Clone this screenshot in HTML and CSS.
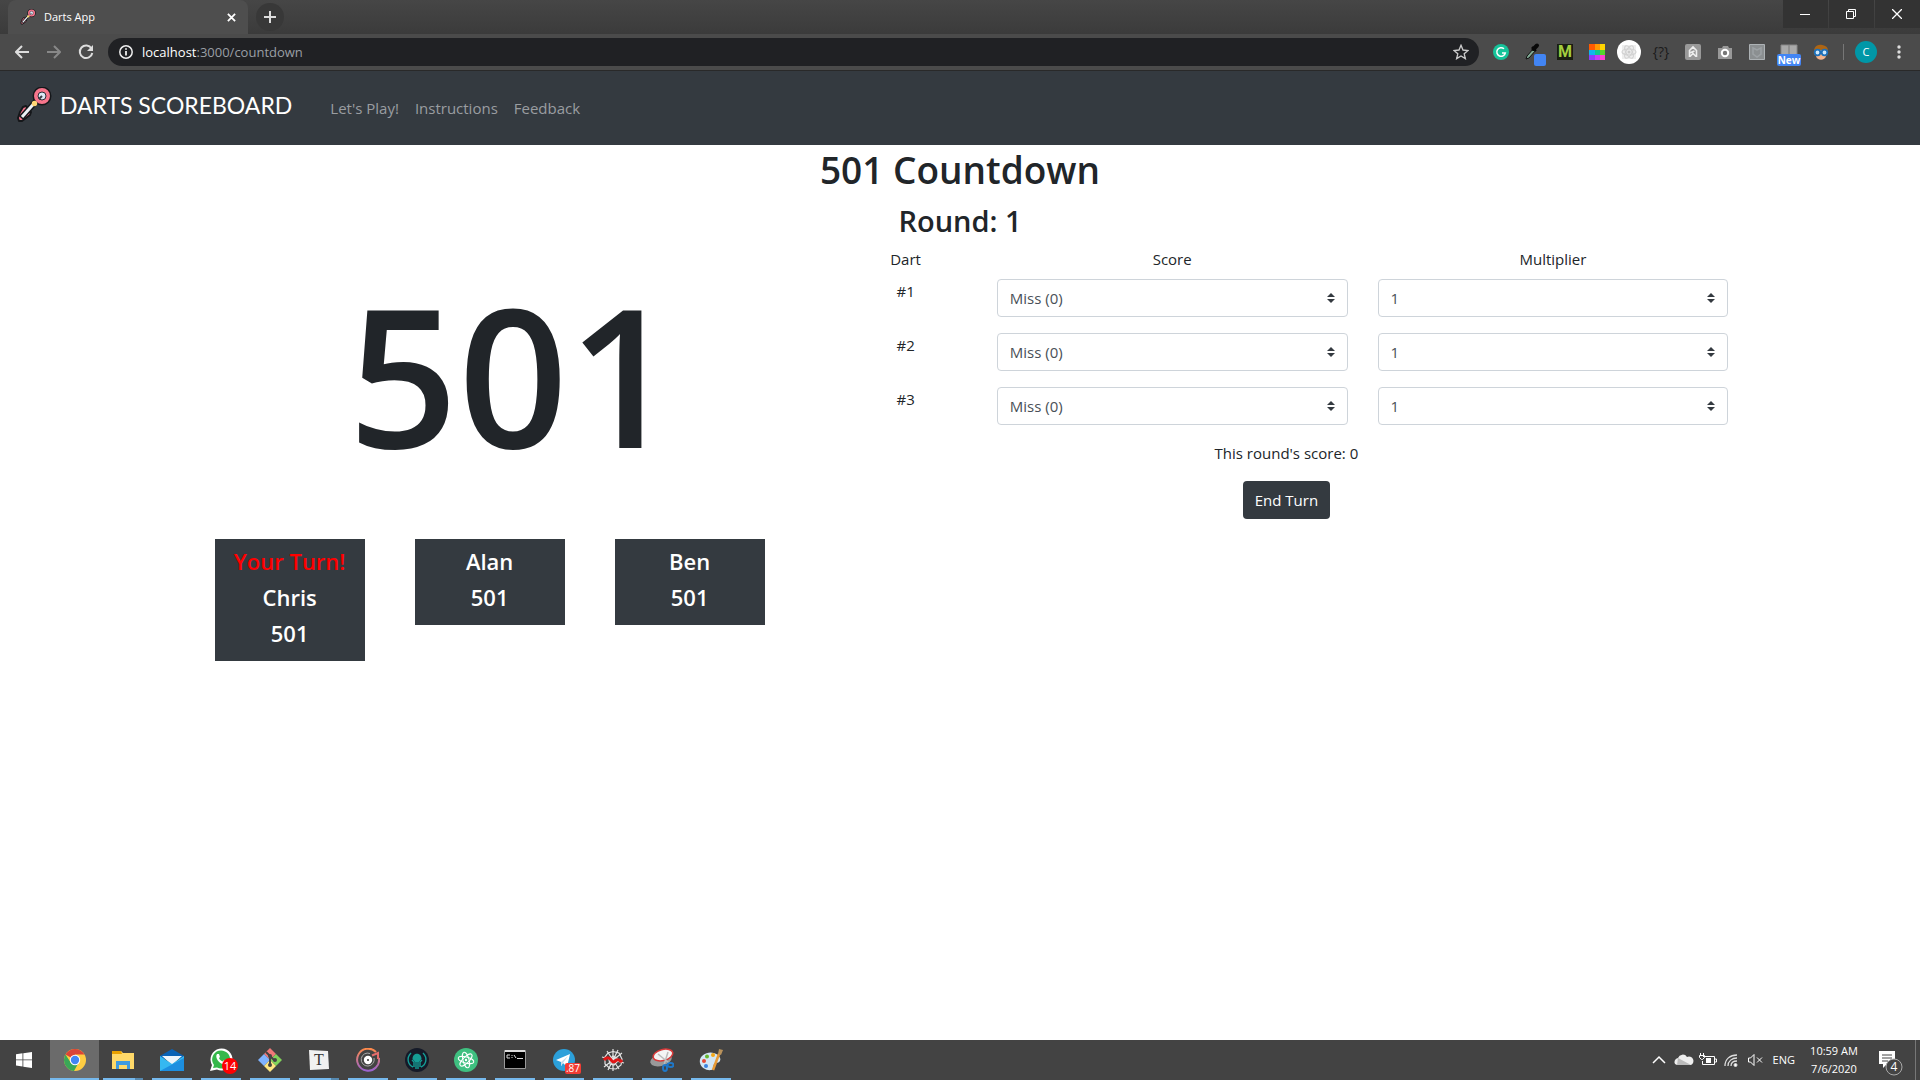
FILE: index.html
```html
<!DOCTYPE html>
<html lang="en">
<head>
<meta charset="utf-8">
<title>Darts App</title>
<link rel="stylesheet" href="styles.css">
</head>
<body>
<svg class="defs" aria-hidden="true">
  <symbol id="dart" viewBox="0 0 36 36">
    <path d="M7 20 10 19 12 22 12 25 15 25 14 28 6 34 3 34 2 31 4 25z" fill="#f7758c" stroke="#15171a" stroke-width="2" stroke-linejoin="round"/>
    <path d="M5 31 22 12" stroke="#15171a" stroke-width="6"/>
    <path d="M6 30 22 12" stroke="#eef2f6" stroke-width="3"/>
    <circle cx="26" cy="9" r="7" fill="none" stroke="#15171a" stroke-width="5"/>
    <circle cx="26" cy="9" r="6" fill="#dce8f6" stroke="#f7758c" stroke-width="4"/>
    <circle cx="26" cy="9" r="4" fill="none" stroke="#2a2c34"/>
    <path d="M23 12 26 9" stroke="#3b3d46" stroke-width="2"/>
    <circle cx="18.500" cy="16.500" r="2.700" fill="#ffd675"/>
  </symbol>
</svg>

<header class="browser">
  <div class="tabs">
    <div class="tab">
      <svg class="favicon" viewBox="0 0 36 36"><use href="#dart"/></svg>
      <span class="tab-title">Darts App</span>
      <button class="plain" aria-label="Close tab"><svg width="9" height="9" viewBox="0 0 10 10"><path d="M1 1l8 8M9 1l-8 8" stroke="#fff" stroke-width="2"/></svg></button>
    </div>
    <button class="plain new-tab" aria-label="New tab"><svg width="12" height="12" viewBox="0 0 12 12"><path d="M6 0v12M0 6h12" stroke="#ddd" stroke-width="2"/></svg></button>
    <div class="window-controls">
      <button class="plain" aria-label="Minimize"><svg width="10" height="10"><path d="M0 5.500h10" stroke="#fff"/></svg></button>
      <button class="plain" aria-label="Restore"><svg width="10" height="10" fill="none" stroke="#fff"><path d="M.5 2.500h7v7h-7zM2.500 2.500v-2h7v7h-2"/></svg></button>
      <button class="plain" aria-label="Close"><svg width="10" height="10"><path d="M0 0l10 10M10 0L0 10" stroke="#fff" stroke-width="1.300"/></svg></button>
    </div>
  </div>
  <div class="toolbar">
    <div class="history">
      <button class="plain" aria-label="Back"><svg width="14" height="14" viewBox="0 0 14 14" fill="none" stroke="#ddd" stroke-width="2"><path d="M14 7H1M7 1 1 7l6 6"/></svg></button>
      <button class="plain" aria-label="Forward"><svg width="14" height="14" viewBox="0 0 14 14" fill="none" stroke="#888" stroke-width="2"><path d="M0 7h13M7 1l6 6-6 6"/></svg></button>
      <button class="plain" aria-label="Reload"><svg width="16" height="16" viewBox="0 0 16 16" fill="none" stroke="#ddd" stroke-width="2"><path d="M13.500 4.500A6.300 6.300 0 1 0 14.300 9"/><path d="M15 1v6H9z" fill="#ddd" stroke="none"/></svg></button>
    </div>
    <div class="address">
      <svg width="14" height="14" viewBox="0 0 14 14"><circle cx="7" cy="7" r="6.200" fill="none" stroke="#eee" stroke-width="1.500"/><path d="M7 6v4.500M7 3.200v1.600" stroke="#eee" stroke-width="1.800"/></svg>
      <span class="url">localhost<span class="path">:3000/countdown</span></span>
      <svg class="star" width="16" height="16" viewBox="0 0 24 24"><path d="M12 2l3 7 7.500.7-5.700 5 1.700 7.300L12 18l-6.500 4 1.700-7.300-5.700-5L9 9z" fill="none" stroke="#ccc" stroke-width="2"/></svg>
    </div>
    <div class="extensions">
      <span class="ext"><svg viewBox="0 0 24 24"><circle cx="12" cy="12" r="8" fill="#15c39a"/><path d="M15 8.800A4.300 4.300 0 1 0 16.300 13H13" fill="none" stroke="#fff" stroke-width="1.500"/></svg></span>
      <span class="ext"><svg viewBox="0 0 24 24"><path d="M5 19l1-3 7-8 2 2-7 8z" fill="#7fa893" stroke="#111"/><path d="M11 7l4 4" stroke="#080808" stroke-width="2"/><path d="M12.500 9 16 5.500" stroke="#080808" stroke-width="4" stroke-linecap="round"/><rect x="13" y="14" width="12" height="12" rx="2" fill="#4285f4"/></svg></span>
      <span class="ext"><b class="m-badge">M</b></span>
      <span class="ext"><svg viewBox="0 0 24 24"><path d="M4 4h6v6H4z" fill="#ff5a00"/><path d="M10 4h5v6h-5z" fill="#ff9800"/><path d="M15 4h5v6h-5z" fill="#ffd400"/><path d="M4 10h6v5H4z" fill="#10b5ee"/><path d="M10 10h5v5h-5z" fill="#0fc98d"/><path d="M15 10h5v5h-5z" fill="#54d62c"/><path d="M4 15h6v5H4z" fill="#8a3ffc"/><path d="M10 15h5v5h-5z" fill="#c63ff5"/><path d="M15 15h5v5h-5z" fill="#ff3fd2"/></svg></span>
      <span class="ext"><svg viewBox="0 0 24 24"><circle cx="12" cy="12" r="12" fill="#fff"/><path d="M5 5h14v14H5z" fill="#eee"/><g fill="none" stroke="#d2d2d2" stroke-width="1.200"><ellipse cx="12" cy="12" rx="7" ry="3"/><ellipse cx="12" cy="12" rx="7" ry="3" transform="rotate(60 12 12)"/><ellipse cx="12" cy="12" rx="7" ry="3" transform="rotate(120 12 12)"/></g><circle cx="12" cy="12" r="1.500" fill="#ccc"/></svg></span>
      <span class="ext code">{?}</span>
      <span class="ext"><svg viewBox="0 0 24 24"><rect x="4" y="4" width="16" height="16" rx="2" fill="#999"/><path d="M8.500 17V10.500L12 7l3.500 3.500V17M8.500 13l5-2M9 16.500l3-3 3 3" fill="none" stroke="#eee" stroke-width="1.600"/></svg></span>
      <span class="ext"><svg viewBox="0 0 24 24"><path d="M5 8h4l1-2h5l1 2h3v11H5z" fill="#999"/><circle cx="12" cy="13" r="3.200" fill="#777" stroke="#fff" stroke-width="2"/></svg></span>
      <span class="ext"><svg viewBox="0 0 24 24"><path d="M4.500 4.500h15v15h-15z" fill="#8b8f91" stroke="#adb2b5"/><path d="M8 8l4 2 4-2v6l-4 3-4-3z" fill="none" stroke="#9da2a5" stroke-width="1.500"/></svg></span>
      <span class="ext"><svg viewBox="0 0 24 24"><path d="M4 5h8v10H4zM12 5h8v10h-8z" fill="#aaa" stroke="#888"/></svg><b class="new">New</b></span>
      <span class="ext"><svg viewBox="0 0 24 24"><path d="M5 15c-1-7 2-11 8-10s7 4 5 11z" fill="#ad6514"/><path d="M7 10h10v6c-1 5-9 5-10 0z" fill="#f3b38a"/><g fill="#cfe8fb" stroke="#1c6fb9" stroke-width="1.800"><circle cx="8.500" cy="12.500" r="2.800"/><circle cx="15.500" cy="12.500" r="2.800"/></g></svg></span>
    </div>
    <span class="divider"></span>
    <span class="avatar">C</span>
    <button class="plain menu" aria-label="Menu"><svg width="4" height="14" fill="#ddd"><circle cx="2" cy="2" r="1.700"/><circle cx="2" cy="7" r="1.700"/><circle cx="2" cy="12" r="1.700"/></svg></button>
  </div>
</header>

<nav class="navbar">
  <a class="brand" href="#"><svg width="36" height="36" viewBox="0 0 36 36"><use href="#dart"/></svg><span>DARTS SCOREBOARD</span></a>
  <div class="links">
    <a href="#">Let's Play!</a>
    <a href="#">Instructions</a>
    <a href="#">Feedback</a>
  </div>
</nav>

<main>
  <h1>501 Countdown</h1>
  <h2>Round: 1</h2>
  <div class="game">
    <section class="standings">
      <p class="remaining">501</p>
      <div class="players">
        <div class="player"><p class="turn">Your Turn!</p><p>Chris</p><p>501</p></div>
        <div class="player"><p>Alan</p><p>501</p></div>
        <div class="player"><p>Ben</p><p>501</p></div>
      </div>
    </section>
    <form class="turn-form">
      <div class="throw head"><span>Dart</span><span>Score</span><span>Multiplier</span></div>
      <div class="throw"><span>#1</span><select aria-label="Dart 1 score"><option>Miss (0)</option></select><select aria-label="Dart 1 multiplier"><option>1</option></select></div>
      <div class="throw"><span>#2</span><select aria-label="Dart 2 score"><option>Miss (0)</option></select><select aria-label="Dart 2 multiplier"><option>1</option></select></div>
      <div class="throw"><span>#3</span><select aria-label="Dart 3 score"><option>Miss (0)</option></select><select aria-label="Dart 3 multiplier"><option>1</option></select></div>
      <p class="round-score">This round's score: 0</p>
      <button class="end-turn" type="button">End Turn</button>
    </form>
  </div>
</main>

<footer class="taskbar">
  <button class="plain start" aria-label="Start"><svg width="16" height="16" viewBox="0 0 16 16" fill="#fff"><path d="M0 2.200 6.500 1.300v6.200H0zM7.300 1.200 16 0v7.500H7.300zM0 8.300h6.500v6.200L0 13.600zM7.300 8.300H16V16l-8.700-1.200z"/></svg></button>
  <div class="apps">
    <button class="plain app active" aria-label="Chrome"><svg viewBox="0 0 24 24"><circle cx="12" cy="12" r="11" fill="#ffcd42"/><path d="M12 12 2.500 6.500A11 11 0 0 1 21.500 6.500H12z" fill="#db4437"/><path d="M2.500 6.500A11 11 0 0 0 11 23l5-9-8 1z" fill="#3aa757"/><circle cx="12" cy="12" r="5.200" fill="#fff"/><circle cx="12" cy="12" r="4.200" fill="#4285f4"/></svg></button>
    <button class="plain app stacked" aria-label="File Explorer"><svg viewBox="0 0 24 24"><path d="M1 3h9l2 2h11v16H1z" fill="#ffd969"/><path d="M1 3h9l1 3H1z" fill="#e9a100"/><path d="M5 21v-8h14v8h-3v-4H8v4z" fill="#3f9be0"/></svg></button>
    <button class="plain app" aria-label="Mail"><svg viewBox="0 0 24 24"><path d="M0 8 12 1l12 7v3H0z" fill="#0a62b5"/><path d="M2 8h20l-10 9z" fill="#eef5fb"/><path d="M0 8l12 8 12-8v15H0z" fill="#35b8f1"/><path d="M0 23 24 10v13z" fill="#1d8fe0"/></svg></button>
    <button class="plain app" aria-label="WhatsApp"><svg viewBox="0 0 24 24"><path d="M1 23l2-6A11 11 0 1 1 8 21.500z" fill="#fff"/><path d="M4 20l1-3a9 9 0 1 1 3 2.500z" fill="#35b84b"/><path d="M8 6c-3 4 4 12 9 10l1-2-3-2-1.500 1.500C11 12 10 10.500 10 10l1-1-1-3z" fill="#fff"/></svg><span class="count">14</span></button>
    <button class="plain app" aria-label="Git"><svg viewBox="0 0 24 24"><path d="M12 0l6 6-6 6-6-6z" fill="#f07878"/><path d="M6 6l6 6-6 6-6-6z" fill="#80b3ff"/><path d="M18 6l6 6-6 6-6-6z" fill="#80d25b"/><path d="M12 12l6 6-6 6-6-6z" fill="#ffe680"/><path d="M8 4l4 4v10M12 8l5 5" fill="none" stroke="#444" stroke-width="2"/><g fill="#444"><circle cx="12" cy="8" r="2"/><circle cx="12" cy="17" r="2"/><circle cx="17" cy="12" r="2"/></g></svg></button>
    <button class="plain app stacked" aria-label="Typora"><svg viewBox="0 0 24 24"><path d="M2 2 21 3 22 21 3 22z" fill="#f1f1f1"/></svg><span class="letter">T</span></button>
    <button class="plain app" aria-label="Music"><svg viewBox="0 0 24 24"><defs><linearGradient id="ring" x2="0" y2="1"><stop stop-color="#ff8a4a"/><stop offset="1" stop-color="#9a63cf"/></linearGradient></defs><path d="M20 4A11 11 0 1 0 23 10" fill="none" stroke="url(#ring)" stroke-width="2"/><path d="M18 10A6.500 6.500 0 1 1 14 5.500" fill="none" stroke="#aaa"/><circle cx="12" cy="12" r="4.200" fill="#fff"/><circle cx="12" cy="12" r="1" fill="#333"/><path d="M16 7.500 22 5v6" fill="none" stroke="#e36c6c" stroke-width="2"/></svg></button>
    <button class="plain app" aria-label="GitKraken"><svg viewBox="0 0 24 24"><circle cx="12" cy="12" r="12" fill="#151a28"/><path d="M7.500 11c0-7 9-7 9 0L14 14h-4z" fill="#159c95"/><path d="M9 19v-5l-2-2M11 21v-8M13 21v-8M15 19v-5l2-2M6 5c-5 5-3 12 2 14M18 5c5 5 3 12-2 14" fill="none" stroke="#159c95" stroke-width="1.400"/></svg></button>
    <button class="plain app" aria-label="Atom"><svg viewBox="0 0 24 24"><circle cx="12" cy="12" r="12" fill="#3fc080"/><g fill="none" stroke="#fff"><ellipse cx="12" cy="12" rx="8" ry="3" transform="rotate(15 12 12)"/><ellipse cx="12" cy="12" rx="8" ry="3" transform="rotate(75 12 12)"/><ellipse cx="12" cy="12" rx="8" ry="3" transform="rotate(135 12 12)"/></g><circle cx="12" cy="12" r="1.200" fill="#fff"/></svg></button>
    <button class="plain app" aria-label="Command Prompt"><svg viewBox="0 0 24 24"><path d="M1.500 2.500h21v18h-21z" fill="#000" stroke="#999"/><path d="M2 2h20v2H2z" fill="#ddd"/><path d="M7 7H4v3h3M9 7v1M9 9v1M11 7l2 3M14 10.500h6" fill="none" stroke="#ddd"/></svg></button>
    <button class="plain app" aria-label="Telegram"><svg viewBox="0 0 24 24"><circle cx="12" cy="12" r="11" fill="#2ca0da"/><path d="M4 12 18 6l-3 13-4-4-2 3v-4z" fill="#fff"/><path d="M9 14l7-6-5 7-2 3z" fill="#c5dcec"/></svg><span class="count square">.87</span></button>
    <button class="plain app" aria-label="Spyder"><svg viewBox="0 0 24 24"><g fill="none" stroke="#e4e4e4" stroke-width="1.200"><path d="M12 1v22M1 9l22 6M3 19 21 5M7 22 17 2M18 21 6 3"/><path d="M12 3.500 18 5l3 6-1 6-5 4-6-.5-5-4.500L4 9l3-4z"/><path d="M12 8l4 2v4l-3 3-4-1-1-4z"/></g><path d="M3 12c3-4 6-2 8 1s5-3 7-1 2 1 3 0" fill="none" stroke="#e01616" stroke-width="3"/></svg></button>
    <button class="plain app" aria-label="Snipping Tool"><svg viewBox="0 0 24 24"><ellipse cx="11" cy="12" rx="11" ry="6" fill="#999" transform="rotate(-15 11 12)"/><ellipse cx="13" cy="7" rx="10" ry="5.500" fill="#f4f4f4" stroke="#d83a3a" stroke-width="1.500" transform="rotate(-15 13 7)"/><path d="M8 6l11 9M18 4l-4 13" stroke="#bbb" stroke-width="1.500"/><g fill="none" stroke="#1f78c8" stroke-width="2"><ellipse cx="15" cy="20" rx="2" ry="3"/><ellipse cx="20.500" cy="17" rx="3" ry="2"/></g></svg></button>
    <button class="plain app" aria-label="Paint"><svg viewBox="0 0 24 24"><path d="M1 15C-1 6 12 1 19 7c5 5 1 8-2 8s-2 3-3 6c-3 3-12 0-13-6z" fill="#d3e7f5"/><g><circle cx="5" cy="13" r="2" fill="#e64a35"/><circle cx="8" cy="8.500" r="2" fill="#66b82e"/><circle cx="14" cy="7" r="2" fill="#f3a719"/><circle cx="7" cy="18" r="2" fill="#3b84df"/></g><path d="M14 22 20 6" stroke="#e89b37" stroke-width="2.500"/><path d="M19 6l1-5 4 1-2 5z" fill="#b9925b"/></svg></button>
  </div>
  <div class="tray">
    <svg width="24" height="24" viewBox="0 0 24 24" fill="none" stroke="#fff" stroke-width="1.500"><path d="M6 15l6-6 6 6"/></svg>
    <svg width="24" height="24" viewBox="0 0 24 24"><path d="M4 16a4 4 0 0 1 3-6 5 5 0 0 1 9-1 4 4 0 0 1 4 8H6z" fill="#eee"/><path d="M7 10l13 7H6z" fill="#bbb"/></svg>
    <svg width="24" height="24" viewBox="0 0 24 24" fill="none" stroke="#fff"><path d="M8 8.500h11.500v8H7.500V13M20 11h1.500v3H20M5.500 5v2M8.500 5v2M4.500 7.500h5v2l-2 2h-1l-2-2z"/><path d="M11 10h5v5h-5z" fill="#fff" stroke="none"/></svg>
    <svg width="24" height="24" viewBox="0 0 24 24" fill="none" stroke="#ddd"><path d="M6 18C6 11 11 7 18 7M9 18c0-5 4-8 9-8M12 18c0-3 2-5 6-5" stroke-width="1.300"/><circle cx="16.500" cy="17" r="1.500" fill="#fff"/></svg>
    <svg width="24" height="24" viewBox="0 0 24 24" fill="none" stroke="#fff"><path d="M5.500 10v4h2l3.500 3.500v-11L7.500 10zM14 9.500l5 5M19 9.500l-5 5"/></svg>
    <span class="lang">ENG</span>
    <time class="clock"><span>10:59 AM</span><span>7/6/2020</span></time>
    <svg class="notes" width="28" height="28" viewBox="0 0 28 28"><path d="M2 3h16v13h-8l-4 4v-4H2z" fill="#fff"/><path d="M5 7h10M5 10h10M5 13h6" stroke="#444"/><circle cx="17" cy="19" r="8" fill="#444" stroke="#aaa"/><text x="17" y="23" text-anchor="middle">4</text></svg>
    <span class="show-desktop"></span>
  </div>
</footer>
</body>
</html>
```
FILE: styles.css
```css
* { box-sizing: border-box; }
body { margin: 0; min-height: 100vh; display: flex; flex-direction: column; background: #fff; color: #212529; font: 15px/24px "Open Sans", "Noto Sans", sans-serif; }
p, h1, h2 { margin: 0; }
a { text-decoration: none; }
.defs { display: none; }
.plain { display: flex; align-items: center; justify-content: center; padding: 0; border: 0; background: none; color: #fff; }

/* Browser chrome */
.browser { background: #4b4b4b; border-bottom: 1px solid #292929; }
.tabs { display: flex; height: 34px; padding-left: 8px; background: linear-gradient(#464646, #3b3b3b); }
.tab { display: flex; align-items: center; gap: 8px; width: 240px; padding: 0 12px; border-radius: 8px 8px 0 0; background: #4e4e4e; color: #fff; font-size: 11px; }
.favicon { width: 16px; height: 16px; }
.tab-title { flex: 1; }
.new-tab { width: 28px; height: 28px; margin: 3px 8px; border-radius: 50%; background: #383838; }
.window-controls { display: flex; gap: 1px; margin-left: auto; }
.window-controls button { width: 45px; height: 28px; padding-right: 2px; background: #333; }
.toolbar { display: flex; align-items: center; height: 36px; }
.history { display: flex; gap: 2px; padding-left: 7px; }
.history button { width: 30px; height: 28px; }
.address { display: flex; align-items: center; flex: 1; gap: 9px; height: 28px; margin: 0 10px 0 7px; padding: 0 10px 0 11px; border-radius: 14px; background: #202124; color: #fff; font-size: 13px; }
.url { flex: 1; }
.path { color: #9a9fa4; }
.extensions { display: flex; gap: 8px; }
.ext { position: relative; display: flex; align-items: center; justify-content: center; width: 24px; height: 24px; }
.ext svg { width: 24px; height: 24px; overflow: visible; }
.code { color: #1b1b1b; font-size: 14px; }
.m-badge { width: 16px; height: 16px; background: #1a1d12; color: #a3cf3f; font: bold 16px/16px Roboto, sans-serif; text-align: center; }
.new { position: absolute; top: 14px; left: 0; width: 24px; border-radius: 2px; background: #4285f4; color: #fff; font-size: 10px; line-height: 12px; text-align: center; }
.divider { width: 1px; height: 16px; margin: 0 11px 0 10px; background: #777; }
.avatar { width: 22px; height: 22px; border-radius: 50%; background: #0097a7; color: #fff; font-size: 11px; line-height: 22px; text-align: center; }
.menu { width: 43px; height: 28px; }

/* Site navigation */
.navbar { display: flex; align-items: center; gap: 38px; height: 74px; padding: 0 16px 6px; background: #343a40; }
.brand { display: flex; align-items: center; gap: 8px; color: #fff; font: 23px/30px Lato, sans-serif; }
.links { display: flex; gap: 16px; padding-top: 6px; }
.links a { color: #9a9da0; }

/* Game */
main { flex: 1; padding: 1px 9.2% 0; }
h1, h2 { font-weight: 600; text-align: center; }
h1 { font-size: 37px; line-height: 48px; }
h2 { padding-top: 8px; font-size: 29px; line-height: 38px; }
.game { display: grid; grid-template-columns: 5fr 7fr; }
.standings { padding-top: 4px; }
.remaining { padding-left: 20px; font-size: 192px; font-weight: 600; line-height: 260px; text-align: center; }
.players { display: flex; align-items: flex-start; gap: 50px; padding: 35px 0 0 38px; }
.player { width: 150px; padding: 4px 0 10px; background: #343a40; color: #fff; font-size: 22px; font-weight: 600; line-height: 36px; text-align: center; }
.turn { color: #f00; }
.turn-form { display: flex; flex-direction: column; align-items: center; padding-top: 7px; }
.throw { display: grid; grid-template-columns: 2fr 5fr 5fr; width: 100%; padding-bottom: 16px; text-align: center; }
.head { padding-bottom: 8px; }
.throw select { height: 38px; margin: 0 15px; padding: 6px 12px; appearance: none; border: 1px solid #ced4da; border-radius: 4px; color: #495057; font: inherit; background: #fff url("data:image/svg+xml,%3Csvg xmlns='http://www.w3.org/2000/svg' viewBox='0 0 4 5'%3E%3Cpath fill='%23343a40' d='M2 0L0 2h4zm0 5L0 3h4z'/%3E%3C/svg%3E") no-repeat right 12px center / 8px 10px; }
.end-turn { height: 38px; margin-top: 16px; padding: 0 12px; border: 0; border-radius: 4px; background: #343a40; color: #fff; font: inherit; }

/* Taskbar */
.taskbar { display: flex; height: 40px; background: #434343; color: #fff; }
.start { width: 50px; padding-right: 2px; }
.apps { display: flex; }
.app { position: relative; width: 49px; border: solid transparent; border-width: 0 5px 0 4px; background: linear-gradient(#76b9ed, #76b9ed) bottom / 40px 2px no-repeat padding-box; }
.app svg { width: 24px; height: 24px; }
.active { background-color: #6b6b6b; background-size: 100% 2px; border-width: 0; }
.stacked { background-image: linear-gradient(90deg, #76b9ed 80%, #5689b0 80%); }
.count { position: absolute; right: 3px; bottom: 6px; width: 16px; border-radius: 8px; background: #f00; font: 11px/16px "Open Sans", sans-serif; text-align: center; }
.square { border-radius: 2px; background: #f23c34; font-size: 10px; line-height: 11px; }
.letter { position: absolute; color: #333; font: 16px/20px "Liberation Serif", serif; }
.tray { display: flex; align-items: center; margin-left: auto; font-size: 11px; line-height: 18px; }
.lang { padding: 0 14px 0 6px; }
.clock { display: flex; flex-direction: column; align-items: center; width: 50px; white-space: nowrap; }
.notes { margin: 4px 10px 0 18px; }
.notes text { fill: #fff; font-size: 12px; }
.show-desktop { width: 5px; height: 40px; border-left: 1px solid #777; }
```
